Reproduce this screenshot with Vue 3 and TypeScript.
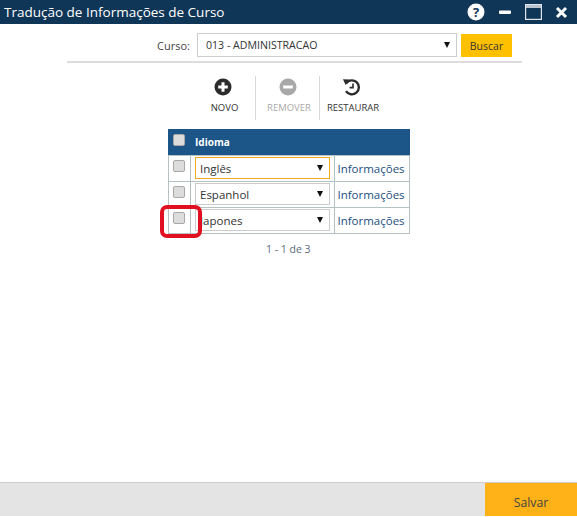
<script setup lang="ts">
const rows = [
  { lang: 'Inglês', focus: true },
  { lang: 'Espanhol', focus: false },
  { lang: 'Japones', focus: false },
]
</script>

<template>
  <div class="app">
    <header class="titlebar">
      <span class="title">Tradução de Informações de Curso</span>
      <div class="winbtns">
        <svg width="18" height="18" viewBox="0 0 18 18"><circle cx="9" cy="9" r="8.5" fill="#fff"/><text x="9" y="13.5" text-anchor="middle" class="q">?</text></svg>
        <svg width="14" height="18" viewBox="0 0 14 18"><rect x="1" y="7.5" width="12" height="3.4" rx="1" fill="#fff"/></svg>
        <svg width="17" height="16" viewBox="0 0 17 16"><rect x="0.6" y="0.6" width="15.8" height="14.8" fill="none" stroke="#dfe5ea" stroke-width="1.2"/><rect x="1" y="1" width="15" height="3" fill="#b9c4ce"/></svg>
        <svg width="13" height="13" viewBox="0 0 13 13"><path d="M2 2l9 9M11 2l-9 9" stroke="#fff" stroke-width="3" fill="none"/></svg>
      </div>
    </header>

    <main class="content">
      <div class="filter">
        <label class="filter-label">Curso:</label>
        <div class="select course"><span>013 - ADMINISTRACAO</span><i class="arrow"></i></div>
        <button class="search">Buscar</button>
      </div>

      <div class="toolbar">
        <div class="tool">
          <svg width="18" height="18" viewBox="0 0 18 18"><circle cx="9" cy="9" r="8.5" fill="#2b2b2b"/><path d="M9 4.2v9.6M4.2 9h9.6" stroke="#fff" stroke-width="3"/></svg>
          <span class="tool-label">NOVO</span>
        </div>
        <div class="tool disabled">
          <svg width="18" height="18" viewBox="0 0 18 18"><circle cx="9" cy="9" r="8.5" fill="#a8a8a8"/><path d="M4.2 9h9.6" stroke="#fff" stroke-width="3"/></svg>
          <span class="tool-label">REMOVER</span>
        </div>
        <div class="tool">
          <svg width="19" height="18" viewBox="0 0 19 18"><path d="M4.2 5.2A7 7 0 1 1 4 13.2" fill="none" stroke="#2b2b2b" stroke-width="2.4"/><path d="M1 1.2l7 .4-4.4 5.4z" fill="#2b2b2b"/><path d="M11 5.4v4.2H7.6" fill="none" stroke="#2b2b2b" stroke-width="1.6"/></svg>
          <span class="tool-label">RESTAURAR</span>
        </div>
      </div>

      <div class="table-wrap">
        <table class="grid">
          <colgroup>
            <col class="c1" />
            <col class="c2" />
            <col class="c3" />
          </colgroup>
          <thead>
            <tr>
              <th class="check-col"><i class="check head"></i></th>
              <th colspan="2" class="head-label">Idioma</th>
            </tr>
          </thead>
          <tbody>
            <tr v-for="row in rows" :key="row.lang">
              <td class="check-col first"><i class="check"></i></td>
              <td class="lang-col">
                <div class="select lang" :class="{ focus: row.focus }"><span>{{ row.lang }}</span><i class="arrow"></i></div>
              </td>
              <td class="info-col">Informações</td>
            </tr>
          </tbody>
        </table>
        <div class="marker"></div>
      </div>
      <div class="pager">1 - 1 de 3</div>
    </main>

    <footer class="footer">
      <button class="save">Salvar</button>
    </footer>
  </div>
</template>

<style>
html, body { margin: 0; background: #fff; }
</style>

<style scoped>
.app {
  width: 577px;
  height: 517px;
  display: flex;
  flex-direction: column;
  font-family: "Open Sans", "Noto Sans", sans-serif;
  color: #333;
  overflow: hidden;
}
.titlebar {
  height: 24px;
  flex: none;
  background: #0f3557;
  display: flex;
  align-items: center;
  justify-content: space-between;
  padding: 0 9px 0 4px;
}
.title { color: #fff; font-size: 13.5px; }
.winbtns { display: flex; align-items: center; gap: 13px; }
.q { font: 700 13px "Open Sans", sans-serif; fill: #0f3557; }
.content { flex: 1; display: flex; flex-direction: column; }
.filter {
  margin: 9px 55px 0 67px;
  padding-bottom: 4px;
  height: 24px;
  border-bottom: 2px solid #dcdcdc;
  display: flex;
  align-items: center;
  justify-content: flex-end;
  padding-right: 10px;
}
.filter-label { font-size: 11px; margin-right: 7px; color: #444; }
.select {
  box-sizing: border-box;
  position: relative;
  background: #fff;
  border: 1px solid #ccc;
  display: flex;
  align-items: center;
  color: #333;
}
.course { width: 260px; height: 24px; font-size: 10.6px; padding-left: 8px; }
.arrow {
  position: absolute;
  right: 6px;
  top: 50%;
  margin-top: -3px;
  border-left: 3.5px solid transparent;
  border-right: 3.5px solid transparent;
  border-top: 6px solid #111;
}
.search {
  margin-left: 4px;
  width: 51px;
  height: 23px;
  border: 0;
  background: #ffc000;
  color: #333;
  font: 10.5px "Open Sans", sans-serif;
  padding: 2px 0 0;
}
.toolbar {
  display: flex;
  justify-content: center;
  margin: 13px 0 0 0;
  height: 44px;
  padding-right: 3px;
}
.tool {
  box-sizing: border-box;
  display: flex;
  flex-direction: column;
  align-items: center;
  font-size: 9.5px;
  color: #333;
  gap: 5px;
  width: 64px;
  padding-top: 2px;
  white-space: nowrap;
}
.tool-label { padding-left: 3px; }
.tool + .tool { border-left: 1px solid #d8d8d8; }
.tool.disabled { color: #aaa; }
.table-wrap {
  position: relative;
  width: 242px;
  margin: 9px 0 0 168px;
}
.grid {
  width: 242px;
  table-layout: fixed;
  border-collapse: separate;
  border-spacing: 0;
  font-size: 11px;
}
.c1 { width: 23px; }
.c2 { width: 144px; }
.c3 { width: 75px; }
thead tr { height: 27px; }
thead th { background: #1c5587; border-bottom: 1px solid #b4c2c4; box-sizing: border-box; }
tbody tr { height: 26px; }
th, td { padding: 0; }
tbody td { border-right: 1px solid #b4c2c4; border-bottom: 1px solid #b4c2c4; box-sizing: border-box; }
tbody td.first { border-left: 1px solid #b4c2c4; }
.check-col { text-align: center; }
.head-label { color: #fff; font-weight: 700; font-size: 10px; text-align: left; padding-left: 4px; }
.lang-col { padding: 0 0 1px 4px; }
.info-col { color: #1c4f80; text-align: center; font-size: 11.5px; white-space: nowrap; padding-right: 2px; }
.check {
  display: inline-block;
  box-sizing: border-box;
  width: 12px;
  height: 12px;
  border: 1px solid #a8a8a8;
  border-radius: 2px;
  background: #dcdcdc;
  vertical-align: 2px;
  margin-right: 2px;
}
.check.head { margin-right: 1px; }
.lang { height: 22px; font-size: 11.5px; padding-left: 4px; width: 135px; }
.lang.focus { border-color: #f0a820; }
.marker {
  position: absolute;
  left: -8px;
  top: 76px;
  width: 42px;
  height: 33px;
  box-sizing: border-box;
  border: 4px solid #e01020;
  border-radius: 7px;
}
.pager { margin: 8px 0 0 266px; font-size: 10.5px; color: #5a6a7a; }
.footer {
  flex: none;
  height: 33px;
  margin-bottom: 1px;
  background: #e4e4e4;
  border-top: 1px solid #ccc;
  display: flex;
  justify-content: flex-end;
}
.save {
  width: 92px;
  border: 0;
  background: #ffb217;
  color: #444;
  font: 12.3px "Open Sans", sans-serif;
  padding: 6px 0 0;
}
</style>
